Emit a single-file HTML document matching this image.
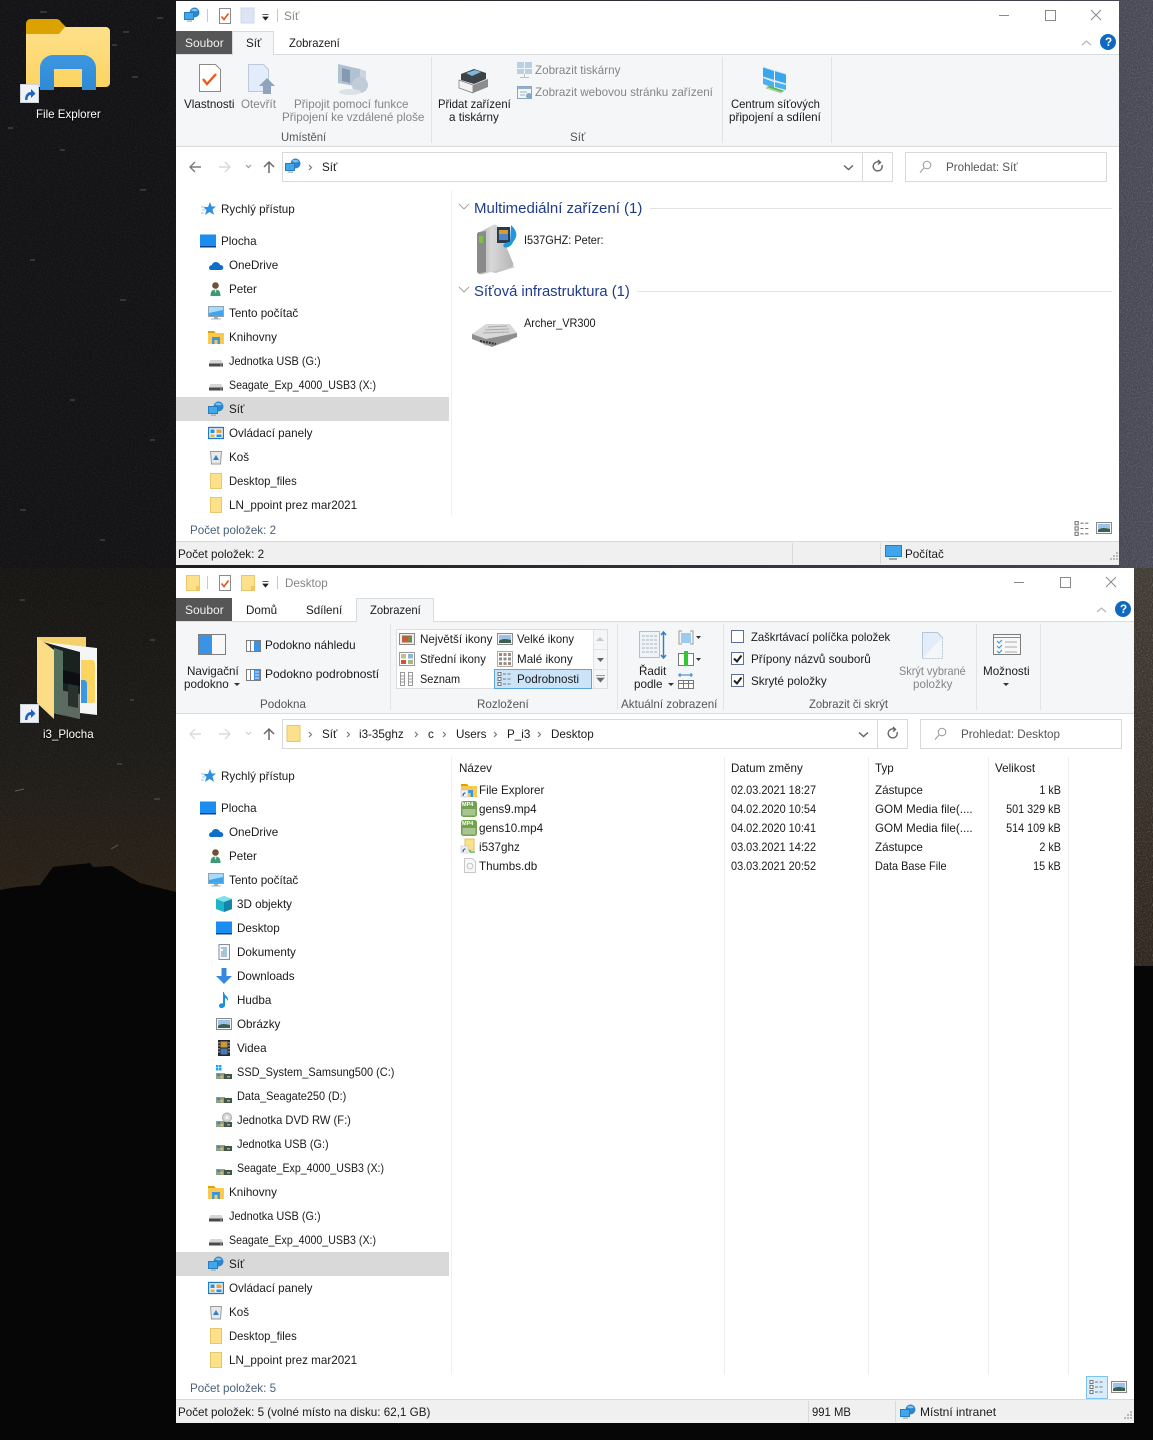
<!DOCTYPE html>
<html><head><meta charset="utf-8"><title>Explorer</title>
<style>
html,body{margin:0;padding:0;background:#070707}
body{position:relative;width:1153px;height:1440px;overflow:hidden}
svg.p{position:absolute;left:0;top:0}
.t{position:absolute;white-space:nowrap;font:12px/14px "Liberation Sans",sans-serif;color:#1a1a1a;transform:scaleX(.97);transform-origin:0 0}
.g{color:#858585}.h{color:#555}.s{color:#49607c}
.w{color:#fff;text-shadow:0 1px 2px #000;transform:scaleX(.96)}
.b{font-size:15px;line-height:18px;color:#1e3a8a;transform:scaleX(1)}
.a{transform:scaleX(.885)}
.c{transform:scaleX(.91)}
.e{transform:scaleX(.94)}
.r{transform:scaleX(.9);transform-origin:100% 0}
</style></head><body>
<svg class="p" width="1153" height="1440" viewBox="0 0 1153 1440" xmlns="http://www.w3.org/2000/svg">
<defs>
<linearGradient id="sky" x1="0" y1="0" x2="1" y2="0"><stop offset="0" stop-color="#17171b"/><stop offset=".5" stop-color="#2c2c34"/><stop offset="1" stop-color="#484856"/></linearGradient>
<linearGradient id="sky2" x1="0" y1="0" x2="0" y2="1"><stop offset="0" stop-color="#181613"/><stop offset=".6" stop-color="#1e1c18"/><stop offset="1" stop-color="#2b2117"/></linearGradient>
<linearGradient id="sky3" x1="0" y1="0" x2="0" y2="1"><stop offset="0" stop-color="#403a34"/><stop offset="1" stop-color="#2e241c"/></linearGradient>
<filter id="nz" x="0" y="0" width="100%" height="100%"><feTurbulence type="fractalNoise" baseFrequency=".8" numOctaves="2" seed="4"/><feColorMatrix values="0 0 0 0 1 0 0 0 0 1 0 0 0 0 1 1.6 0 0 0 -.7"/></filter>
<linearGradient id="ye" x1="0" y1="0" x2="0" y2="1"><stop offset="0" stop-color="#fde08a"/><stop offset="1" stop-color="#fdd462"/></linearGradient>
<linearGradient id="bl" x1="0" y1="0" x2="0" y2="1"><stop offset="0" stop-color="#3d97e0"/><stop offset="1" stop-color="#2f8ad6"/></linearGradient>
<linearGradient id="srv" x1="0" y1="0" x2="1" y2="0"><stop offset="0" stop-color="#a8a8a8"/><stop offset=".4" stop-color="#d8d8d8"/><stop offset="1" stop-color="#b5b5b5"/></linearGradient>
<symbol id="net" viewBox="0 0 16 16"><circle cx="10.500" cy="5.500" r="5" fill="#2e86c8"/><path d="M7 3c2-1.500 5-1.500 7 .5-2 1-5 1.500-7-.5z" fill="#7fc3ee"/><rect x=".5" y="5.500" width="9" height="7" fill="#42a6ea" stroke="#2a7cc0"/><rect x="3" y="13.500" width="5" height="1.200" fill="#9aa"/></symbol>
<symbol id="star" viewBox="0 0 16 16"><path d="M9 1l1.700 4.500H15l-3.500 3 1.500 5.200L8.500 11 4 14l1.500-5L2 6h5z" fill="#2f8ee0"/><path d="M0 6h4M1 9h3M0 12h3" stroke="#9cc9ee" fill="none"/></symbol>
<symbol id="desk" viewBox="0 0 16 16"><rect x="0" y="1.500" width="16" height="13" fill="#1b8df0"/><rect x="0" y="13" width="16" height="1.500" fill="#0b3f86"/></symbol>
<symbol id="od" viewBox="0 0 16 16"><path d="M1 11c0-1.800 1.300-2.800 2.800-2.800C4.400 5.700 7 4.300 9.400 5.300c1.300.5 2.300 1.500 2.700 2.700 1.700 0 3.200 1 3.200 2.600S14 13 12.800 13H3c-1.100 0-2-.9-2-2z" fill="#0f6fc6"/></symbol>
<symbol id="pe" viewBox="0 0 16 16"><circle cx="7.500" cy="4.500" r="3.300" fill="#6e5138"/><path d="M2.500 15c0-5 2-6.500 5-6.500s5 1.500 5 6.500z" fill="#3c9b72"/><path d="M6.500 8.500h2l-.5 3h-1z" fill="#e8d6c2"/></symbol>
<symbol id="pc" viewBox="0 0 16 16"><rect x=".5" y="1.500" width="15" height="10" fill="#3fa6ee" stroke="#8fa3b3"/><path d="M1 2h14v3L1 8z" fill="#a8dafa"/><rect x="6" y="12" width="4" height="1.500" fill="#9aa"/><rect x="3" y="13.500" width="10" height="1" fill="#aeb6bc"/></symbol>
<symbol id="lib" viewBox="0 0 16 16"><path d="M0 2h6l2 2h8v11H0z" fill="#fcc94f"/><path d="M0 2h6l1.500 2H0z" fill="#dca300"/><path d="M4 15V8h8v7H9.500v-4h-3v4z" fill="#3d97e0"/></symbol>
<symbol id="usb" viewBox="0 0 16 16"><path d="M2.500 7h11l1.500 3.500H1z" fill="#d6d6d6"/><rect x="1" y="10.500" width="14" height="3" fill="#4a4a4a"/><rect x="12" y="11.500" width="2" height="1" fill="#5ad05a"/></symbol>
<symbol id="cp" viewBox="0 0 16 16"><rect x=".5" y="2.500" width="15" height="11" fill="#e8f2fa" stroke="#1b7cc4" stroke-width="1.300"/><rect x="2.500" y="4.500" width="4" height="3.500" fill="#2f8fd8"/><rect x="8.500" y="4.500" width="5" height="3.500" fill="#e9a23b"/><rect x="2.500" y="9.500" width="4" height="2.500" fill="#e9b13b"/><rect x="8.500" y="9.500" width="5" height="2.500" fill="#2f8fd8"/></symbol>
<symbol id="bin" viewBox="0 0 16 16"><path d="M2.500 2.500h11l-1 12.500h-9z" fill="#e6e8ea" stroke="#9a9a9a"/><path d="M8 6l3 5H5z" fill="#2f82c8"/></symbol>
<symbol id="fy" viewBox="0 0 16 16"><rect x="2.500" y=".5" width="11" height="15" fill="#fde08a" stroke="#e8c76a"/></symbol>
<symbol id="cube" viewBox="0 0 16 16"><path d="M8 0l8 3v10l-8 3-8-3V3z" fill="#1fb3c8"/><path d="M8 6l8-3v10l-8 3z" fill="#1385a8"/><path d="M8 0l8 3-8 3-8-3z" fill="#7fe2ea"/></symbol>
<symbol id="doc" viewBox="0 0 16 16"><rect x="3" y=".5" width="10.500" height="15" fill="#f8f8f8" stroke="#8a8f96"/><path d="M5 4h6M7 6h4M5 8h6M5 10h6M5 12h6" stroke="#4f8fc4" fill="none"/></symbol>
<symbol id="dl" viewBox="0 0 16 16"><path d="M5.500 0h5v8H16l-8 8-8-8h5.500z" fill="#3588dc"/></symbol>
<symbol id="mu" viewBox="0 0 16 16"><path d="M8 0c0 4 5 4 4 9-1-2-2-3-3-3v7c0 2-2 3-3.500 3S3 15 3 13.500 5 11 7 11.500V0z" fill="#1a90e0"/></symbol>
<symbol id="pic" viewBox="0 0 16 16"><rect x=".5" y="2.500" width="15" height="11" fill="#f4f4f4" stroke="#8a8a8a"/><rect x="2" y="4" width="12" height="8" fill="#9cc4e8"/><path d="M2 10c3-3 8-2 12-1v3H2z" fill="#3c5f52"/></symbol>
<symbol id="vid" viewBox="0 0 16 16"><rect x="2" y="0" width="12" height="16" fill="#23272e"/><rect x="4.500" y="1.500" width="7" height="6" fill="#c89a3a"/><rect x="4.500" y="8.500" width="7" height="6" fill="#4a7ab4"/><path d="M3 2v12M13 2v12" stroke="#ddd" stroke-dasharray="1.500 1.500" fill="none"/></symbol>
<symbol id="hd" viewBox="0 0 16 16"><rect x="0" y="9" width="9" height="6" fill="#8fa08f"/><rect x="8" y="10" width="8" height="5" fill="#48514c"/><rect x="11" y="12" width="3" height="1.500" fill="#6bd46b"/><rect x="1.500" y="10" width="2.500" height="2" fill="#2f82c8"/><rect x="4.500" y="12" width="2.500" height="2" fill="#d8c060"/></symbol>
<symbol id="ssd" viewBox="0 0 16 16"><use href="#hd"/><rect x="0" y="1" width="2.500" height="2.500" fill="#1ea4f0"/><rect x="3" y="1" width="2.500" height="2.500" fill="#1ea4f0"/><rect x="0" y="4" width="2.500" height="2.500" fill="#1ea4f0"/><rect x="3" y="4" width="2.500" height="2.500" fill="#1ea4f0"/></symbol>
<symbol id="dvd" viewBox="0 0 16 16"><use href="#hd"/><circle cx="11" cy="5.500" r="4.500" fill="#d6dadc" stroke="#a2a6a8"/><circle cx="11" cy="5.500" r="1.300" fill="#fff"/></symbol>
<symbol id="sc" viewBox="0 0 19 19"><rect x=".5" y=".5" width="18" height="18" fill="#eef1f6" stroke="#cfd4da"/><path d="M5 16c0-5 2.500-8 6-8V5l4.500 4.500L11 14v-3c-2.500 0-3.500 2-3.500 5z" fill="#1f62c4"/></symbol>
<symbol id="fl" viewBox="0 0 16 16"><rect x="1.500" y=".5" width="13" height="15" fill="#fde08a" stroke="#e9c66c"/><rect x="11" y="11" width="3.500" height="4.500" fill="#f2c65c"/></symbol>
<symbol id="ck" viewBox="0 0 12 16"><rect x=".5" y=".5" width="11" height="15" fill="#fff" stroke="#8c8c8c"/><path d="M2.500 8.500l2.500 3 4.500-6" stroke="#e8571b" stroke-width="1.700" fill="none"/></symbol>
<symbol id="mp4" viewBox="0 0 16 16"><rect x="0" y="0" width="16" height="16" rx="2.500" fill="#71a34e"/><rect x="1.500" y="8" width="13" height="6.500" fill="#a8c490"/></symbol>
<symbol id="vd" viewBox="0 0 16 16"><rect x="1" y="1.500" width="3" height="3" fill="#fff" stroke="#777"/><rect x="1" y="6.500" width="3" height="3" fill="#fff" stroke="#777"/><rect x="1" y="11.500" width="3" height="3" fill="#fff" stroke="#777"/><path d="M6 3h3M10.500 3h3M6 8h3M10.500 8h3M6 13h3M10.500 13h3" stroke="#777" fill="none"/></symbol>
<symbol id="vl" viewBox="0 0 16 16"><path d="M1.500 1.500h4v13h-4zM9.500 1.500h4v13h-4z" fill="#fff" stroke="#999"/><path d="M2 5h3M2 8h3M2 11h3M10 5h3M10 8h3M10 11h3" stroke="#999" fill="none"/></symbol>
<symbol id="vm" viewBox="0 0 16 16"><path d="M.5 .5h15v15H.5z" fill="#fff" stroke="#aaa"/><path d="M2 2h3v3H2zM6.500 2h3v3h-3zM11 2h3v3h-3zM2 6.500h3v3H2zM6.500 6.500h3v3h-3zM11 6.500h3v3h-3zM2 11h3v3H2zM6.500 11h3v3h-3zM11 11h3v3h-3z" fill="#9a8a80"/></symbol>
<symbol id="vn" viewBox="0 0 16 16"><rect x=".5" y="1.500" width="15" height="13" fill="#fff" stroke="#999"/><rect x="2" y="3" width="5" height="4.500" fill="#c8bc8a"/><rect x="9" y="3" width="5" height="4.500" fill="#8ab6dc"/><rect x="2" y="9" width="5" height="4" fill="#d9503c"/><rect x="9" y="9" width="5" height="4" fill="#a9b880"/></symbol>
<symbol id="vx" viewBox="0 0 16 16"><rect x=".5" y="2.500" width="15" height="11" fill="#eee" stroke="#888"/><rect x="3" y="4.500" width="10" height="7" fill="#a96a3c"/><rect x="5" y="6" width="4" height="4" fill="#d9503c"/><rect x="9" y="6" width="3" height="4" fill="#5a9a4e"/></symbol>
</defs>

<!-- desktop background -->
<rect width="1153" height="1440" fill="#060606"/>
<rect x="0" y="0" width="1153" height="568" fill="url(#sky)"/>
<rect x="0" y="0" width="176" height="568" fill="#131316"/>
<rect x="0" y="568" width="176" height="330" fill="url(#sky2)"/>
<rect x="1134" y="568" width="19" height="398" fill="url(#sky3)"/>
<rect width="176" height="892" fill="#fff" filter="url(#nz)" opacity=".1"/>
<rect x="1119" width="34" height="966" fill="#fff" filter="url(#nz)" opacity=".3"/>
<rect x="0" y="892" width="176" height="548" fill="#060606"/>
<path d="M0 890L17 887 40 885 53 867 90 863 93 867 112 866 140 883 176 892V900H0z" fill="#060606"/>
<path d="M15 791l9-2M111 849l7-4M154 799h6M117 764h5M40 12h7M123 32h6M157 18h6M132 77h6M112 45h5M8 128h5M60 150h5M140 190h6M30 260h5M120 300h6M70 400h5M150 440h5M20 510h6M100 540h5M150 640h5M20 600h5M130 700h4" stroke="#8a8878" stroke-width="1" fill="none" opacity=".55"/>
<rect x="1134" y="966" width="19" height="474" fill="#060606"/>

<!-- File Explorer desktop icon -->
<path d="M26 24c0-3 2-5 5-5h25c2 0 4 1 5 3l5 5v7H26z" fill="#dca300"/>
<path d="M26 34h33l6-7h41c2 0 4 2 4 4v52c0 2-2 4-4 4H30c-2 0-4-2-4-4z" fill="url(#ye)"/>
<path d="M40 90V68c0-7 6-13 13-13h30c7 0 13 6 13 13v22H82V69H54v21z" fill="url(#bl)"/>
<use href="#sc" x="20" y="84" width="19" height="19"/>

<!-- i3_Plocha folder -->
<path d="M37 637h49v30H37z" fill="#f4cf6a"/>
<path d="M43 642l54 6v67l-17-2v6l-27-6z" fill="#f5f5f5"/>
<path d="M81 660h11c2 0 3 2 3 4v37c0 2-1 2-3 2H81z" fill="#fcd45f"/>
<path d="M81 680h3c2 0 3 2 3 4v19h-6z" fill="#3d97e0"/>
<path d="M43 642l37 10v67l-26-6z" fill="#1a2220"/>
<path d="M54 648l9 3v64l-9-2z" fill="#54705f"/>
<path d="M63 670l17 4v12l-17-3z" fill="#0c0e12"/>
<path d="M60 690l20 4v25l-20-5z" fill="#5c6a62"/>
<path d="M68 684l10 2v22l-10-2z" fill="#2a3230"/>
<path d="M37 637l17 13v69l-17-16z" fill="#fcdc84"/>
<use href="#sc" x="20" y="704" width="19" height="19"/>

<!-- WINDOW 1 -->
<rect x="176" y="1" width="943" height="564" fill="#fff"/>
<rect x="176" y="55" width="943" height="91" fill="#f5f6f7"/>
<path d="M176 54.500h56M274 54.500h845M176 146.500h943" stroke="#dadbdc" fill="none"/>
<rect x="176" y="31" width="56" height="23" fill="#565656"/>
<path d="M232.500 55V31.500h41V55" fill="#f5f6f7" stroke="#dadbdc"/>
<rect x="233" y="54" width="40" height="2" fill="#f5f6f7"/>
<path d="M431.500 57v86M722.500 57v86M831.500 57v86" stroke="#e2e3e4" fill="none"/>
<path d="M207.500 9v13M277.500 9v13" stroke="#c8c8c8" fill="none"/>
<use href="#net" x="184" y="7" width="16" height="16"/>
<use href="#ck" x="217" y="8" width="16" height="16"/>
<rect x="241" y="8" width="13" height="15" fill="#dbe5f4" stroke="#cdd8e8"/>
<path d="M262.500 14.500h6M263 17h5l-2.500 3z" stroke="#222" fill="#222" stroke-width=".8"/>
<path d="M999 15.500h10M1045.500 10.500h10v10h-10zM1091 10l10 10M1101 10l-10 10" stroke="#8a8a8a" fill="none"/>
<path d="M1082 45l4.500-4 4.500 4" stroke="#b5b5b5" fill="none" stroke-width="1.200"/>
<circle cx="1108" cy="42" r="8" fill="#0f69c0"/>
<!-- ribbon icons W1 -->
<path d="M199.500 64.500h16l5 5v22h-21z" fill="#fff" stroke="#8a8a8a"/><path d="M203 79l4 5 9-10" stroke="#ec5a1c" stroke-width="2.400" fill="none"/>
<path d="M248.500 64.500h15l5 5v22h-20z" fill="#e3ecfa" stroke="#bcc8dc"/><path d="M267 78l8 8h-4v8h-8v-8h-4z" fill="#8fa5bd"/>
<g opacity=".8"><path d="M338 64l22 5v18l-22-4z" fill="#a0b4c8"/><path d="M342 68l8 2v13l-8-2z" fill="#6a84a0"/><path d="M360 69l6 2v14l-6 3z" fill="#c4cfdb"/><circle cx="360" cy="85" r="8" fill="#b4c2d0"/><ellipse cx="350" cy="92" rx="11" ry="3" fill="#d5dde5"/></g>
<path d="M461 74l13-5 12 4v6l-12 5-13-4z" fill="#3e4347"/><path d="M466 73l9-3 6 2-9 4z" fill="#7fb8dc"/><path d="M459 80l14 5v8l-14-5z" fill="#f2f2f2" stroke="#777" stroke-width=".7"/><path d="M473 85l15-6v8l-15 6z" fill="#8c8c8c"/>
<g fill="#b8cfe6"><rect x="517" y="62" width="7" height="6"/><rect x="525" y="62" width="7" height="6"/><rect x="517" y="69" width="7" height="5"/><rect x="525" y="69" width="7" height="5"/></g><path d="M524.500 74v3M520 77.500h9" stroke="#b5bfc9" fill="none"/>
<rect x="517.500" y="86.500" width="14" height="12" fill="#f4f7fa" stroke="#8fa5bd"/><rect x="518" y="87" width="13" height="2" fill="#8fb0d0"/><path d="M520 92h7M520 95h5" stroke="#a0b0c0" fill="none"/><circle cx="529" cy="96" r="3" fill="#7fa8cc"/>
<path d="M763 67l11 4v10l-11-4z" fill="#3aa6ee"/><path d="M775 71l11 3v10l-11-3z" fill="#3aa6ee"/><path d="M763 78l11 4v6l-11-4zM775 82l11 3v5l-11-3z" fill="#4ab0f2"/><path d="M763 67l23 7M763 77l23 7" stroke="#d5e8f4" fill="none"/><path d="M766 87l15 5 4-1-15-5z" fill="#52c04a"/><path d="M766 88l16 5" stroke="#bbb" fill="none"/>
<!-- address W1 -->
<rect x="282.500" y="152.500" width="580" height="29" fill="#fff" stroke="#d9d9d9"/>
<rect x="862.500" y="152.500" width="30" height="29" fill="#fff" stroke="#d9d9d9"/>
<rect x="905.500" y="152.500" width="201" height="29" fill="#fff" stroke="#d9d9d9"/>
<path d="M201 167h-11m5-5l-5 5 5 5" stroke="#7a7a7a" stroke-width="1.400" fill="none"/>
<path d="M219 167h11m-5-5l5 5-5 5" stroke="#d8d8d8" stroke-width="1.400" fill="none"/>
<path d="M246 165l2.500 2.500 2.500-2.500" stroke="#9a9a9a" stroke-width="1.200" fill="none"/>
<path d="M269 173v-11m-5 5l5-5 5 5" stroke="#6a6a6a" stroke-width="1.500" fill="none"/>
<use href="#net" x="285" y="158" width="16" height="16"/>
<path d="M309 165l2.500 2.500-2.500 2.500" stroke="#7a7a7a" stroke-width="1.200" fill="none"/>
<path d="M844 165.500l4.500 4 4.500-4" stroke="#666" stroke-width="1.500" fill="none"/>
<path d="M882 165a4.500 4.500 0 1 1-2-2.500M878 160l2.500 2.500-2.500 2" stroke="#666" stroke-width="1.400" fill="none"/>
<circle cx="927" cy="165" r="3.800" fill="none" stroke="#999"/><path d="M924 168l-4 4.500" stroke="#999" fill="none"/>
<!-- nav W1 -->
<path d="M451.500 190v325" stroke="#f0f0f0" fill="none"/>
<rect x="176" y="397" width="273" height="24" fill="#d9d9d9"/>
<use href="#star" x="201" y="201" width="16" height="16"/>
<use href="#desk" x="200" y="233" width="16" height="16"/>
<use href="#od" x="208" y="257" width="16" height="16"/>
<use href="#pe" x="208" y="281" width="16" height="16"/>
<use href="#pc" x="208" y="305" width="16" height="16"/>
<use href="#lib" x="208" y="329" width="16" height="16"/>
<use href="#usb" x="208" y="353" width="16" height="16"/>
<use href="#usb" x="208" y="377" width="16" height="16"/>
<use href="#net" x="208" y="401" width="16" height="16"/>
<use href="#cp" x="208" y="425" width="16" height="16"/>
<use href="#bin" x="208" y="449" width="16" height="16"/>
<use href="#fy" x="208" y="473" width="16" height="16"/>
<use href="#fy" x="208" y="497" width="16" height="16"/>
<!-- content W1 -->
<path d="M459 204l5 5 5-5M459 287l5 5 5-5" stroke="#a5a5a5" fill="none"/>
<path d="M650 208.500h462M637 291.500h475" stroke="#e2e2e2" fill="none"/>
<path d="M480 270l16 3 19-6-6-3-18 3z" fill="#c4c4c4"/>
<path d="M477 235c0-2 1-3 3-3l13-7c2-1 4 0 5 2l15 36c1 2 0 3-2 4l-28 7c-3 1-6 0-6-3z" fill="url(#srv)"/>
<path d="M477 235c0-2 1-3 3-3l6-1v41l-6 1c-2 0-3-1-3-3z" fill="#8a8a8a"/><rect x="479" y="236" width="4" height="7" fill="#7cc04a"/>
<rect x="497" y="227" width="13" height="16" fill="#2c3a4a"/><rect x="499" y="230" width="9" height="10" fill="#4e86c4"/><path d="M499 230h9v4h-9z" fill="#d59a3a"/>
<path d="M511 225c5 5 8 10 2 17-1 4-7 7-9 5-2-2 1-5 6-5z" fill="#2196e0"/>
<path d="M472 334l14-10h24l7 9-8 9-24 4z" fill="#d8d8d8"/><path d="M472 334l14 5 31-6v4l-25 10-20-8z" fill="#8e8e8e"/><path d="M480 341l16 3" stroke="#333" stroke-width="2" stroke-dasharray="2 1" fill="none"/><path d="M485 330l24-1M488 327l19-1M483 333l26-1" stroke="#aaa" fill="none"/>
<use href="#vd" x="1074" y="520" width="17" height="17"/>
<use href="#pic" x="1096" y="520" width="16" height="16"/>
<!-- statusbar W1 -->
<rect x="176" y="542" width="943" height="23" fill="#f0f0f0"/>
<path d="M176 541.500h943M792.500 543v21M880.500 543v21" stroke="#d9d9d9" fill="none"/>
<rect x="885.500" y="545.500" width="16" height="11" fill="#3fa6ee" stroke="#2a7cc0"/><rect x="889" y="558" width="8" height="2" fill="#9aa"/>
<path d="M1116 552h2v2h-2zM1113 555h2v2h-2zM1116 555h2v2h-2zM1110 558h2v2h-2zM1113 558h2v2h-2zM1116 558h2v2h-2z" fill="#b9b9b9"/>

<!-- WINDOW 2 -->
<rect x="176" y="568" width="958" height="855" fill="#fff"/>
<rect x="176" y="622" width="958" height="91" fill="#f5f6f7"/>
<path d="M176 621.500h180M434 621.500h700M176 713.500h958" stroke="#dadbdc" fill="none"/>
<rect x="176" y="598" width="56" height="23" fill="#565656"/>
<path d="M356.500 622V598.500h77V622" fill="#f5f6f7" stroke="#dadbdc"/>
<rect x="357" y="620" width="76" height="3" fill="#f5f6f7"/>
<path d="M390.500 624v86M617.500 624v86M723.500 624v86M976.500 624v86M1040.500 624v86" stroke="#e2e3e4" fill="none"/>
<path d="M207.500 576v13M277.500 576v13" stroke="#c8c8c8" fill="none"/>
<use href="#fl" x="185" y="575" width="16" height="16"/>
<use href="#ck" x="217" y="575" width="16" height="16"/>
<use href="#fl" x="240" y="575" width="16" height="16"/>
<path d="M262.500 581.500h6M263 584h5l-2.500 3z" stroke="#222" fill="#222" stroke-width=".8"/>
<path d="M1014 582.500h10M1060.500 577.500h10v10h-10zM1106 577l10 10M1116 577l-10 10" stroke="#8a8a8a" fill="none"/>
<path d="M1097 612l4.500-4 4.500 4" stroke="#b5b5b5" fill="none" stroke-width="1.200"/>
<circle cx="1123" cy="609" r="8" fill="#0f69c0"/>
<!-- W2 ribbon icons -->
<rect x="198.500" y="634.500" width="27" height="20" fill="#f8f8f8" stroke="#7d7d7d"/><rect x="199" y="635" width="13" height="19" fill="#3a93e4"/>
<rect x="246.500" y="640.500" width="14" height="11" fill="#fff" stroke="#7d7d7d"/><rect x="254" y="641" width="6" height="10" fill="#3a93e4"/><path d="M250.500 641v10" stroke="#7d7d7d"/>
<rect x="246.500" y="669.500" width="14" height="11" fill="#fff" stroke="#7d7d7d"/><rect x="254" y="670" width="6" height="10" fill="#3a93e4"/><path d="M255 672h4M255 675h4M255 678h4" stroke="#e8f0f8" fill="none"/><path d="M250.500 670v10" stroke="#7d7d7d"/>
<rect x="396.500" y="629.500" width="211" height="59" fill="#fff" stroke="#dcdcdc"/>
<rect x="593" y="630" width="14" height="58" fill="#f5f6f7"/>
<path d="M593.500 630v58M593.500 649.500h14M593.500 669.500h14" stroke="#e4e4e4" fill="none"/>
<path d="M596 641l4-4 4 4z" fill="#c8c8c8"/><path d="M597 658h7l-3.500 4z" fill="#666"/><path d="M596 675.500h9M597 678h7l-3.500 4z" stroke="#777" fill="#666" stroke-width=".8"/>
<rect x="494.500" y="669.500" width="97" height="19" fill="#cce4f7" stroke="#5aa6e0"/>
<use href="#vx" x="399" y="631" width="16" height="16"/>
<use href="#pic" x="497" y="631" width="16" height="16"/>
<use href="#vn" x="399" y="651" width="16" height="16"/>
<use href="#vm" x="497" y="651" width="16" height="16"/>
<use href="#vl" x="399" y="671" width="16" height="16"/>
<use href="#vd" x="497" y="671" width="16" height="16"/>
<rect x="639.500" y="631.500" width="20" height="26" fill="#eef3f8" stroke="#b5bec8"/><path d="M642 636h15M642 640h15M642 644h15M642 648h15M642 652h15" stroke="#a8b4c0" stroke-dasharray="3 1" fill="none"/>
<path d="M663.500 633v24M661 635l2.500-3 2.500 3M661 655l2.500 3 2.500-3" stroke="#2b7fc8" stroke-width="1.400" fill="none"/>
<path d="M682 631h-3v13h3M690 631h3v13h-3" stroke="#999" fill="none"/><rect x="681" y="633" width="10" height="10" fill="#9ccaf0"/><path d="M696 636h5l-2.500 3z" fill="#333"/>
<rect x="678.500" y="653.500" width="15" height="12" fill="#fff" stroke="#777"/><rect x="684" y="651" width="4" height="15" fill="#32c832"/><path d="M696 658h5l-2.500 3z" fill="#333"/>
<path d="M678 675h15M680 673v4M691 673v4" stroke="#2b7fc8" fill="none"/><rect x="678.500" y="680.500" width="15" height="8" fill="#fff" stroke="#777"/><path d="M678 683.500h15M683.500 681v7M688.500 681v7" stroke="#777" fill="none"/>
<path d="M668 683h6l-3 3z" fill="#333"/>
<path d="M234 683h6l-3 3z" fill="#333"/>
<rect x="731.500" y="630.500" width="12" height="12" fill="#fff" stroke="#5f6f96"/>
<rect x="731.500" y="652.500" width="12" height="12" fill="#fff" stroke="#5f6f96"/><path d="M734 658.500l3 3 4.500-6" stroke="#222" stroke-width="2" fill="none"/>
<rect x="731.500" y="674.500" width="12" height="12" fill="#fff" stroke="#5f6f96"/><path d="M734 680.500l3 3 4.500-6" stroke="#222" stroke-width="2" fill="none"/>
<path d="M922.500 632.500h15l5 5L922.500 658z" fill="#e3ecfa"/><path d="M922.500 658v-25.500h15l5 5" fill="none" stroke="#b8c6da"/><path d="M922.500 658.500h20v-21" fill="none" stroke="#b8c6da" stroke-dasharray="2 1"/>
<rect x="993.500" y="634.500" width="27" height="20" fill="#f8f8f8" stroke="#7d7d7d"/><path d="M994 637.500h26" stroke="#8a8a8a"/><path d="M997 641l2 2 3-3M997 646l2 2 3-3M997 651l2 2 3-3" stroke="#3a8fd8" fill="none"/><path d="M1005 642h12M1005 647h12M1005 652h12" stroke="#a8a8a8" fill="none"/>
<path d="M1003 683h6l-3 3z" fill="#333"/>
<!-- address W2 -->
<rect x="282.500" y="719.500" width="595" height="29" fill="#fff" stroke="#d9d9d9"/>
<rect x="877.500" y="719.500" width="30" height="29" fill="#fff" stroke="#d9d9d9"/>
<rect x="920.500" y="719.500" width="201" height="29" fill="#fff" stroke="#d9d9d9"/>
<path d="M201 734h-11m5-5l-5 5 5 5M219 734h11m-5-5l5 5-5 5" stroke="#dcdcdc" stroke-width="1.400" fill="none"/>
<path d="M246 732l2.500 2.500 2.500-2.500" stroke="#d0d0d0" stroke-width="1.200" fill="none"/>
<path d="M269 740v-11m-5 5l5-5 5 5" stroke="#6a6a6a" stroke-width="1.500" fill="none"/>
<rect x="287" y="725.500" width="13" height="16" fill="#fde08a" stroke="#e9c66c"/>
<path d="M309 732l2.500 2.500-2.500 2.500M347 732l2.500 2.500-2.500 2.500M415 732l2.500 2.500-2.500 2.500M443 732l2.500 2.500-2.500 2.500M494 732l2.500 2.500-2.500 2.500M538 732l2.500 2.500-2.500 2.500" stroke="#7a7a7a" stroke-width="1.200" fill="none"/>
<path d="M859 732.500l4.500 4 4.500-4" stroke="#666" stroke-width="1.500" fill="none"/>
<path d="M897 732a4.500 4.500 0 1 1-2-2.500M893 727l2.500 2.500-2.500 2" stroke="#666" stroke-width="1.400" fill="none"/>
<circle cx="942" cy="732" r="3.800" fill="none" stroke="#999"/><path d="M939 735l-4 4.500" stroke="#999" fill="none"/>
<!-- nav W2 -->
<path d="M451.500 757v618" stroke="#f0f0f0" fill="none"/>
<rect x="176" y="1252" width="273" height="24" fill="#d9d9d9"/>
<use href="#star" x="201" y="768" width="16" height="16"/>
<use href="#desk" x="200" y="800" width="16" height="16"/>
<use href="#od" x="208" y="824" width="16" height="16"/>
<use href="#pe" x="208" y="848" width="16" height="16"/>
<use href="#pc" x="208" y="872" width="16" height="16"/>
<use href="#cube" x="216" y="896" width="16" height="16"/>
<use href="#desk" x="216" y="920" width="16" height="16"/>
<use href="#doc" x="216" y="944" width="16" height="16"/>
<use href="#dl" x="216" y="968" width="16" height="16"/>
<use href="#mu" x="216" y="992" width="16" height="16"/>
<use href="#pic" x="216" y="1016" width="16" height="16"/>
<use href="#vid" x="216" y="1040" width="16" height="16"/>
<use href="#ssd" x="216" y="1064" width="16" height="16"/>
<use href="#hd" x="216" y="1088" width="16" height="16"/>
<use href="#dvd" x="216" y="1112" width="16" height="16"/>
<use href="#hd" x="216" y="1136" width="16" height="16"/>
<use href="#hd" x="216" y="1160" width="16" height="16"/>
<use href="#lib" x="208" y="1184" width="16" height="16"/>
<use href="#usb" x="208" y="1208" width="16" height="16"/>
<use href="#usb" x="208" y="1232" width="16" height="16"/>
<use href="#net" x="208" y="1256" width="16" height="16"/>
<use href="#cp" x="208" y="1280" width="16" height="16"/>
<use href="#bin" x="208" y="1304" width="16" height="16"/>
<use href="#fy" x="208" y="1328" width="16" height="16"/>
<use href="#fy" x="208" y="1352" width="16" height="16"/>
<!-- details W2 -->
<path d="M724.500 757v618M868.500 757v618M988.500 757v618M1068.500 757v618" stroke="#eeeeee" fill="none"/>
<use href="#lib" x="461" y="782" width="16" height="16"/><rect x="461" y="790" width="7" height="7" fill="#eef2f8" stroke="#bbb" stroke-width=".5"/><path d="M463 796c0-2 1-3 2.500-3" stroke="#1f62c4" stroke-width="1.200" fill="none"/>
<use href="#mp4" x="461" y="801" width="16" height="16"/>
<use href="#mp4" x="461" y="820" width="16" height="16"/>
<rect x="465" y="839" width="9" height="11" fill="#fde08a" stroke="#e0bf63"/><rect x="461" y="846" width="7" height="7" fill="#eef2f8" stroke="#bbb" stroke-width=".5"/><path d="M463 852c0-2 1-3 2.500-3" stroke="#1f62c4" stroke-width="1.200" fill="none"/><path d="M470 850v2h5" stroke="#3cb13c" stroke-width="1.300" fill="none"/>
<path d="M464.500 858.500h8l3 3v11h-11z" fill="#f7f7f7" stroke="#c9c9c9"/><circle cx="470" cy="866" r="2.800" fill="none" stroke="#c4c4c4"/>
<text x="462" y="806" font-family="Liberation Sans, sans-serif" font-size="5.500" font-weight="bold" fill="#fff">MP4</text>
<text x="462" y="825" font-family="Liberation Sans, sans-serif" font-size="5.500" font-weight="bold" fill="#fff">MP4</text>
<!-- view buttons W2 -->
<rect x="1086.500" y="1376.500" width="21" height="22" fill="#d8ecfb" stroke="#7cc3ee"/>
<use href="#vd" x="1089" y="1379" width="16" height="16"/>
<use href="#pic" x="1111" y="1379" width="16" height="16"/>
<!-- status W2 -->
<rect x="176" y="1400" width="958" height="23" fill="#f0f0f0"/>
<path d="M176 1399.500h958M808.500 1401v21M895.500 1401v21" stroke="#d9d9d9" fill="none"/>
<use href="#net" x="900" y="1404" width="16" height="16"/>
<path d="M1130 1411h2v2h-2zM1127 1414h2v2h-2zM1130 1414h2v2h-2zM1124 1417h2v2h-2zM1127 1417h2v2h-2zM1130 1417h2v2h-2z" fill="#b9b9b9"/>
</svg>

<!-- desktop labels -->
<div class="t w" style="left:36px;top:107px">File Explorer</div>
<div class="t w" style="left:43px;top:727px">i3_Plocha</div>

<!-- W1 text -->
<div class="t g" style="left:284px;top:9px">Síť</div>
<div class="t" style="left:185px;top:36px;color:#f0f0f0;transform:scaleX(1)">Soubor</div>
<div class="t" style="left:246px;top:36px">Síť</div>
<div class="t e" style="left:289px;top:36px">Zobrazení</div>
<div class="t" style="left:184px;top:97px">Vlastnosti</div>
<div class="t g" style="left:241px;top:97px">Otevřít</div>
<div class="t g" style="left:294px;top:97px">Připojit pomocí funkce</div>
<div class="t g" style="left:282px;top:110px">Připojení ke vzdálené ploše</div>
<div class="t h e" style="left:281px;top:130px">Umístění</div>
<div class="t e" style="left:438px;top:97px">Přidat zařízení</div>
<div class="t" style="left:449px;top:110px">a tiskárny</div>
<div class="t g" style="left:535px;top:63px">Zobrazit tiskárny</div>
<div class="t g" style="left:535px;top:85px">Zobrazit webovou stránku zařízení</div>
<div class="t h" style="left:570px;top:130px">Síť</div>
<div class="t e" style="left:731px;top:97px">Centrum síťových</div>
<div class="t" style="left:729px;top:110px">připojení a sdílení</div>
<div class="t" style="left:322px;top:160px">Síť</div>
<div class="t h" style="left:946px;top:160px">Prohledat: Síť</div>
<div class="t" style="left:221px;top:202px">Rychlý přístup</div>
<div class="t" style="left:221px;top:234px">Plocha</div>
<div class="t" style="left:229px;top:258px">OneDrive</div>
<div class="t" style="left:229px;top:282px">Peter</div>
<div class="t" style="left:229px;top:306px">Tento počítač</div>
<div class="t" style="left:229px;top:330px">Knihovny</div>
<div class="t c" style="left:229px;top:354px">Jednotka USB (G:)</div>
<div class="t a" style="left:229px;top:378px">Seagate_Exp_4000_USB3 (X:)</div>
<div class="t" style="left:229px;top:402px">Síť</div>
<div class="t" style="left:229px;top:426px">Ovládací panely</div>
<div class="t" style="left:229px;top:450px">Koš</div>
<div class="t e" style="left:229px;top:474px">Desktop_files</div>
<div class="t" style="left:229px;top:498px">LN_ppoint prez mar2021</div>
<div class="t b" style="left:474px;top:199.500px">Multimediální zařízení (1)</div>
<div class="t b" style="left:474px;top:282.500px;transform:scaleX(.985)">Síťová infrastruktura (1)</div>
<div class="t c" style="left:524px;top:233px">I537GHZ: Peter:</div>
<div class="t c" style="left:524px;top:316px">Archer_VR300</div>
<div class="t s" style="left:190px;top:523px">Počet položek: 2</div>
<div class="t" style="left:178px;top:547px">Počet položek: 2</div>
<div class="t" style="left:905px;top:547px">Počítač</div>

<!-- W2 text -->
<div class="t g" style="left:285px;top:576px">Desktop</div>
<div class="t" style="left:185px;top:603px;color:#f0f0f0;transform:scaleX(1)">Soubor</div>
<div class="t" style="left:246px;top:603px">Domů</div>
<div class="t" style="left:306px;top:603px">Sdílení</div>
<div class="t e" style="left:370px;top:603px">Zobrazení</div>
<div class="t" style="left:187px;top:664px">Navigační</div>
<div class="t" style="left:184px;top:677px">podokno</div>
<div class="t" style="left:265px;top:638px">Podokno náhledu</div>
<div class="t" style="left:265px;top:667px;transform:scaleX(1)">Podokno podrobností</div>
<div class="t" style="left:420px;top:632px">Největší ikony</div>
<div class="t e" style="left:517px;top:632px">Velké ikony</div>
<div class="t e" style="left:420px;top:652px">Střední ikony</div>
<div class="t" style="left:517px;top:652px">Malé ikony</div>
<div class="t c" style="left:420px;top:672px">Seznam</div>
<div class="t" style="left:517px;top:672px">Podrobnosti</div>
<div class="t h" style="left:260px;top:697px">Podokna</div>
<div class="t h" style="left:477px;top:697px">Rozložení</div>
<div class="t h" style="left:621px;top:697px">Aktuální zobrazení</div>
<div class="t h e" style="left:809px;top:697px">Zobrazit či skrýt</div>
<div class="t" style="left:639px;top:664px">Řadit</div>
<div class="t" style="left:634px;top:677px">podle</div>
<div class="t e" style="left:751px;top:630px">Zaškrtávací políčka položek</div>
<div class="t" style="left:751px;top:652px">Přípony názvů souborů</div>
<div class="t" style="left:751px;top:674px">Skryté položky</div>
<div class="t g c" style="left:899px;top:664px">Skrýt vybrané</div>
<div class="t g" style="left:913px;top:677px">položky</div>
<div class="t" style="left:983px;top:664px">Možnosti</div>
<div class="t" style="left:322px;top:727px">Síť</div>
<div class="t" style="left:359px;top:727px">i3-35ghz</div>
<div class="t" style="left:428px;top:727px">c</div>
<div class="t" style="left:456px;top:727px">Users</div>
<div class="t" style="left:507px;top:727px">P_i3</div>
<div class="t" style="left:551px;top:727px">Desktop</div>
<div class="t h" style="left:961px;top:727px">Prohledat: Desktop</div>
<div class="t" style="left:221px;top:769px">Rychlý přístup</div>
<div class="t" style="left:221px;top:801px">Plocha</div>
<div class="t" style="left:229px;top:825px">OneDrive</div>
<div class="t" style="left:229px;top:849px">Peter</div>
<div class="t" style="left:229px;top:873px">Tento počítač</div>
<div class="t" style="left:237px;top:897px">3D objekty</div>
<div class="t" style="left:237px;top:921px">Desktop</div>
<div class="t" style="left:237px;top:945px">Dokumenty</div>
<div class="t" style="left:237px;top:969px">Downloads</div>
<div class="t" style="left:237px;top:993px">Hudba</div>
<div class="t" style="left:237px;top:1017px">Obrázky</div>
<div class="t" style="left:237px;top:1041px">Videa</div>
<div class="t" style="left:237px;top:1065px;transform:scaleX(.915)">SSD_System_Samsung500 (C:)</div>
<div class="t c" style="left:237px;top:1089px">Data_Seagate250 (D:)</div>
<div class="t" style="left:237px;top:1113px;transform:scaleX(.93)">Jednotka DVD RW (F:)</div>
<div class="t c" style="left:237px;top:1137px">Jednotka USB (G:)</div>
<div class="t a" style="left:237px;top:1161px">Seagate_Exp_4000_USB3 (X:)</div>
<div class="t" style="left:229px;top:1185px">Knihovny</div>
<div class="t c" style="left:229px;top:1209px">Jednotka USB (G:)</div>
<div class="t a" style="left:229px;top:1233px">Seagate_Exp_4000_USB3 (X:)</div>
<div class="t" style="left:229px;top:1257px">Síť</div>
<div class="t" style="left:229px;top:1281px">Ovládací panely</div>
<div class="t" style="left:229px;top:1305px">Koš</div>
<div class="t e" style="left:229px;top:1329px">Desktop_files</div>
<div class="t" style="left:229px;top:1353px">LN_ppoint prez mar2021</div>
<div class="t" style="left:459px;top:761px">Název</div>
<div class="t" style="left:731px;top:761px">Datum změny</div>
<div class="t" style="left:875px;top:761px">Typ</div>
<div class="t" style="left:995px;top:761px">Velikost</div>
<div class="t" style="left:479px;top:783px">File Explorer</div>
<div class="t c" style="left:731px;top:783px">02.03.2021 18:27</div>
<div class="t" style="left:875px;top:783px">Zástupce</div>
<div class="t r" style="right:92px;top:783px">1 kB</div>
<div class="t" style="left:479px;top:802px">gens9.mp4</div>
<div class="t c" style="left:731px;top:802px">04.02.2020 10:54</div>
<div class="t" style="left:875px;top:802px">GOM Media file(....</div>
<div class="t r" style="right:92px;top:802px">501 329 kB</div>
<div class="t" style="left:479px;top:821px">gens10.mp4</div>
<div class="t c" style="left:731px;top:821px">04.02.2020 10:41</div>
<div class="t" style="left:875px;top:821px">GOM Media file(....</div>
<div class="t r" style="right:92px;top:821px">514 109 kB</div>
<div class="t" style="left:479px;top:840px">i537ghz</div>
<div class="t c" style="left:731px;top:840px">03.03.2021 14:22</div>
<div class="t" style="left:875px;top:840px">Zástupce</div>
<div class="t r" style="right:92px;top:840px">2 kB</div>
<div class="t" style="left:479px;top:859px">Thumbs.db</div>
<div class="t c" style="left:731px;top:859px">03.03.2021 20:52</div>
<div class="t c" style="left:875px;top:859px">Data Base File</div>
<div class="t r" style="right:92px;top:859px">15 kB</div>
<div class="t s" style="left:190px;top:1381px">Počet položek: 5</div>
<div class="t" style="left:178px;top:1405px">Počet položek: 5 (volné místo na disku: 62,1 GB)</div>
<div class="t e" style="left:812px;top:1405px">991 MB</div>
<div class="t" style="left:920px;top:1405px;transform:scaleX(1)">Místní intranet</div>
<div class="t" style="left:1104.500px;top:35px;color:#fff;font-weight:bold">?</div>
<div class="t" style="left:1119.500px;top:602px;color:#fff;font-weight:bold">?</div>
</body></html>
